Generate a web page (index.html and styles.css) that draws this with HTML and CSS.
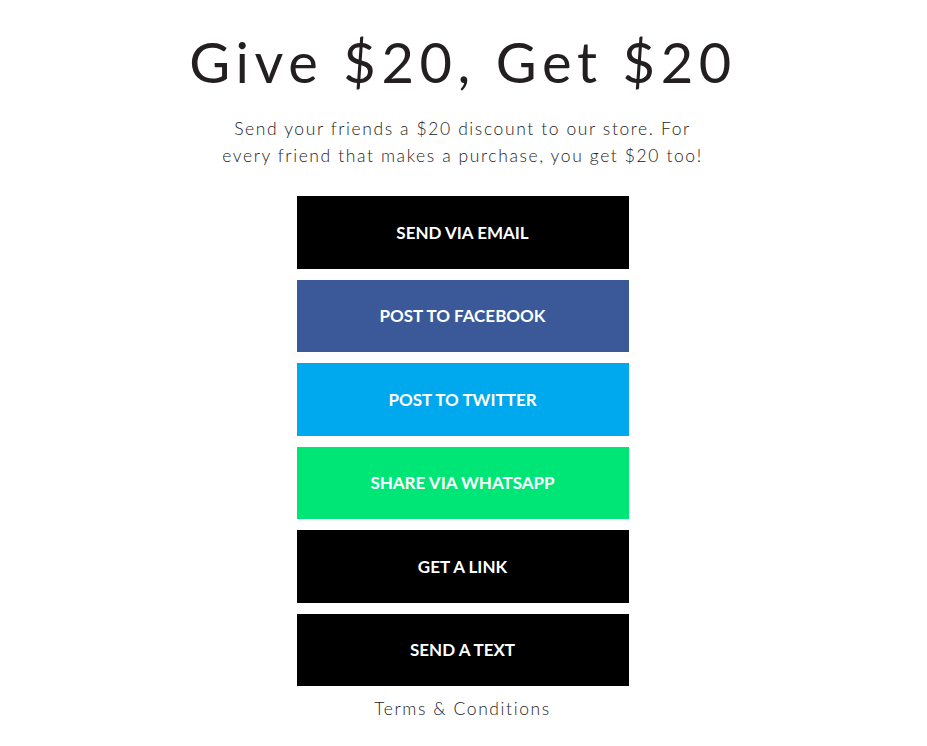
FILE: index.html
```html
<!DOCTYPE html>
<html lang="en">
<head>
  <meta charset="UTF-8">
  <meta name="viewport" content="width=device-width, initial-scale=1.0">
  <title>Give $20, Get $20</title>
  <link rel="stylesheet" href="styles.css">
</head>
<body>
  <div class="referral">
    <h1>Give $20, Get $20</h1>
    <p class="intro">Send your friends a $20 discount to our store. For<br>every friend that makes a purchase, you get $20 too!</p>

    <div class="share-list">
      <button class="share email">SEND VIA EMAIL</button>
      <button class="share facebook">POST TO FACEBOOK</button>
      <button class="share twitter">POST TO TWITTER</button>
      <button class="share whatsapp">SHARE VIA WHATSAPP</button>
      <button class="share link">GET A LINK</button>
      <button class="share text">SEND A TEXT</button>
    </div>

    <a class="terms" href="#">Terms &amp; Conditions</a>
  </div>
</body>
</html>
```

FILE: styles.css
```css
/* Reset */
* { box-sizing: border-box; margin: 0; padding: 0; }
body { font-family: 'Lato', 'Open Sans', sans-serif; background: #fff; color: #222; }

/* Bloque principal */
.referral { display: flex; flex-direction: column; align-items: center; padding-top: 30px; padding-right: 2px; }
.referral h1 { font-weight: 400; font-size: 56px; line-height: 64px; letter-spacing: 5.6px; color: #231f20; padding-left: 1px; }
.intro { margin-top: 21px; font-size: 17.5px; font-weight: 300; line-height: 27px; letter-spacing: 1.6px; text-align: center; color: #222; }

/* Botones para compartir */
.share-list { margin-top: 27px; display: flex; flex-direction: column; gap: 11px; }
.share { width: 332px; height: 72.5px; border: none; color: #fff; font-family: 'Lato', sans-serif; font-weight: 700; font-size: 17px; cursor: pointer; }
.share.email, .share.link, .share.text { background: #000; }
.share.facebook { background: #3b5998; }
.share.twitter { background: #00a9ee; }
.share.whatsapp { background: #00e676; }

.terms { margin-top: 12px; font-size: 17.5px; font-weight: 300; letter-spacing: 1.6px; color: #222; text-decoration: none; }
```
